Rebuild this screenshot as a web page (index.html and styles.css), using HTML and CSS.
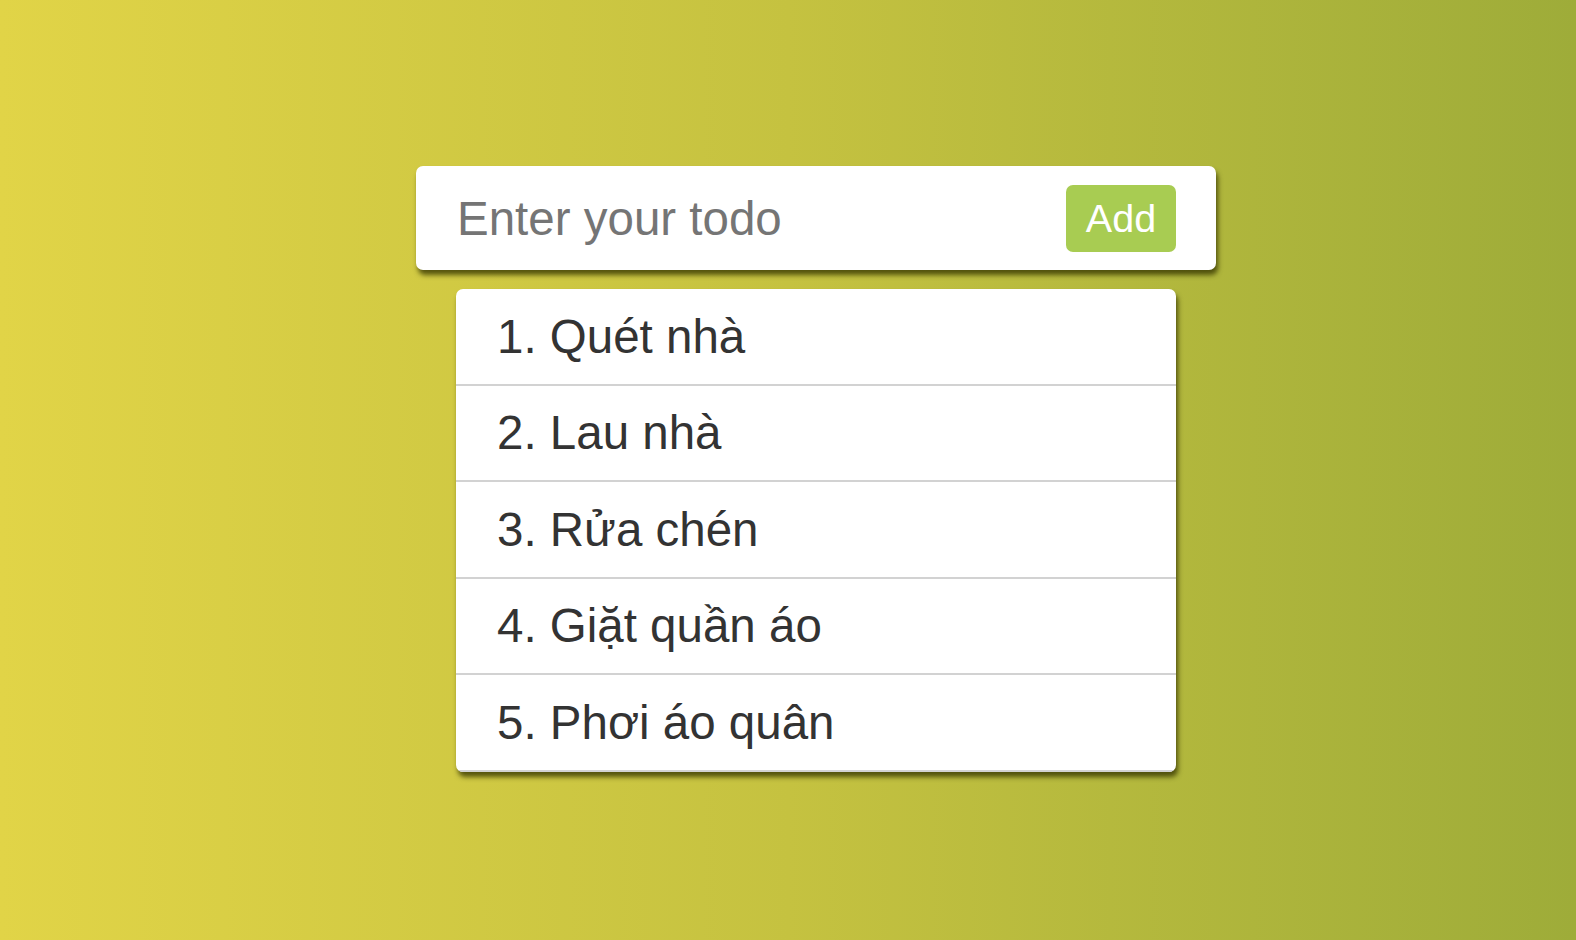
FILE: index.html
```html
<!DOCTYPE html>
<html lang="vi">
<head>
<meta charset="utf-8">
<title>Todo</title>
<link rel="stylesheet" href="styles.css">
</head>
<body>
<main class="app">
  <form class="todo-form">
    <input class="todo-input" type="text" placeholder="Enter your todo">
    <button class="add-btn" type="button">Add</button>
  </form>
  <ul class="todo-list">
    <li class="todo-item">1. Quét nhà</li>
    <li class="todo-item">2. Lau nhà</li>
    <li class="todo-item">3. Rửa chén</li>
    <li class="todo-item">4. Giặt quần áo</li>
    <li class="todo-item">5. Phơi áo quân</li>
  </ul>
</main>
</body>
</html>
```
FILE: styles.css
```css
html, body {
  margin: 0;
  padding: 0;
  height: 100%;
}
body {
  background: linear-gradient(to right, #e1d447 0%, #c5c240 50%, #9eac39 100%);
  font-family: "Liberation Sans", Arial, Helvetica, sans-serif;
  overflow: hidden;
}
.app {
  display: flex;
  flex-direction: column;
  align-items: center;
  padding-top: 166px;
  padding-left: 56px;
}
.todo-form {
  width: 800px;
  height: 104px;
  box-sizing: border-box;
  background: #fff;
  border-radius: 7px;
  box-shadow: 2px 5px 5px rgba(55, 55, 0, 0.8);
  display: flex;
  align-items: center;
  padding: 0 40px 0 41px;
}
.todo-input {
  flex: 1;
  border: none;
  outline: none;
  background: transparent;
  font-family: inherit;
  font-size: 47.5px;
  color: #333;
  padding: 0;
  min-width: 0;
}
.todo-input::placeholder {
  color: #757575;
}
.add-btn {
  width: 110px;
  height: 67px;
  border: none;
  border-radius: 7px;
  background: #a8cc52;
  color: #fff;
  font-family: inherit;
  font-size: 39.5px;
  padding: 0;
}
.todo-list {
  list-style: none;
  margin: 19px 0 0 0;
  padding: 0;
  width: 720px;
  background: #fff;
  border-radius: 7px;
  box-shadow: 2px 5px 5px rgba(55, 55, 0, 0.8);
  overflow: hidden;
}
.todo-item {
  height: 96.5px;
  box-sizing: border-box;
  border-bottom: 2px solid #d2d2d2;
  display: flex;
  align-items: center;
  padding-left: 41px;
  font-size: 47.5px;
  color: #333;
}
```
